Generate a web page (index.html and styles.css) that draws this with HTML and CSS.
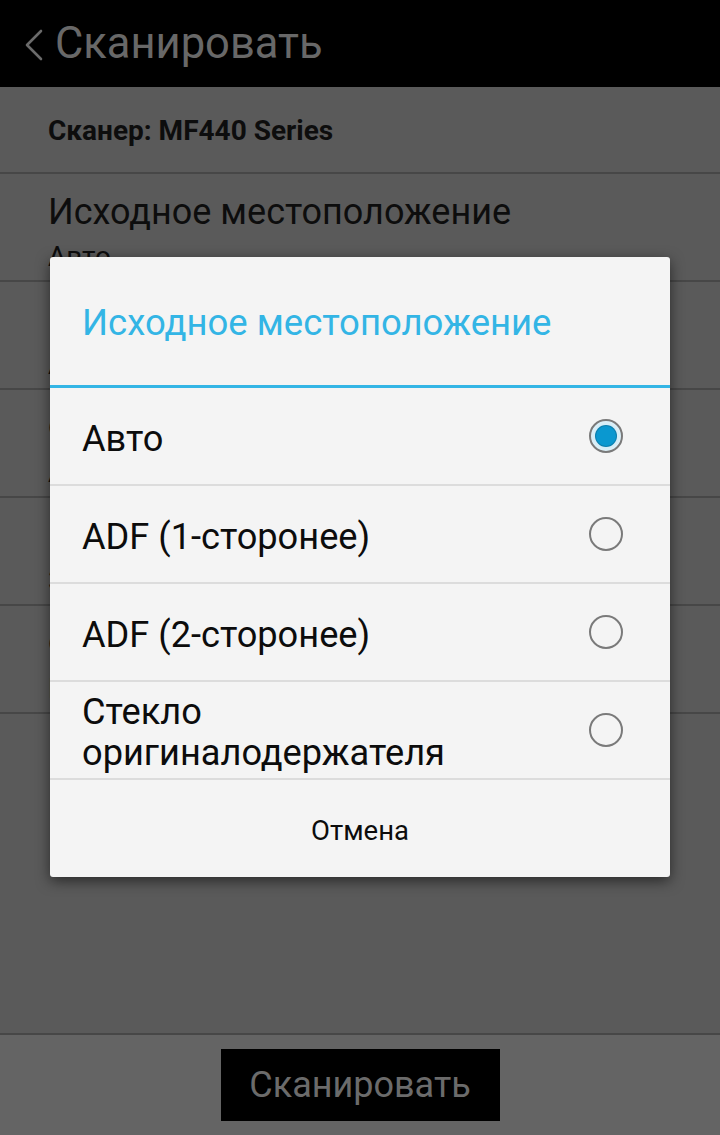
FILE: index.html
```html
<!DOCTYPE html>
<html lang="ru">
<head>
<meta charset="utf-8">
<title>Сканировать</title>
<link rel="stylesheet" href="styles.css">
</head>
<body>
<div class="screen">
  <header class="appbar">
    <svg class="back" width="20" height="32" viewBox="0 0 20 32"><polyline points="17,2 3,16 17,30" fill="none" stroke="#6a6a6a" stroke-width="2.6" stroke-linecap="round" stroke-linejoin="round"/></svg>
    <span class="apptitle">Сканировать</span>
  </header>
  <main class="list">
    <div class="row row-head">Сканер: MF440 Series</div>
    <div class="row"><div class="r-title">Исходное местоположение</div><div class="r-sub">Авто</div></div>
    <div class="row"><div class="r-title">Цветной режим</div><div class="r-sub">Авто (цвет/ч/б)</div></div>
    <div class="row"><div class="r-title">Формат документа</div><div class="r-sub">A4</div></div>
    <div class="row"><div class="r-title">Разрешение</div><div class="r-sub">300x300 т/д</div></div>
    <div class="row"><div class="r-title">Формат файла</div><div class="r-sub">PDF</div></div>
  </main>
  <footer class="bottombar"><button class="scanbtn">Сканировать</button></footer>

  <div class="dialog">
    <div class="d-title">Исходное местоположение</div>
    <div class="d-items">
      <div class="d-item"><span class="d-label">Авто</span><span class="radio checked"></span></div>
      <div class="d-item"><span class="d-label">ADF (1-сторонее)</span><span class="radio"></span></div>
      <div class="d-item"><span class="d-label">ADF (2-сторонее)</span><span class="radio"></span></div>
      <div class="d-item"><span class="d-label">Стекло<br>оригиналодержателя</span><span class="radio"></span></div>
    </div>
    <div class="d-cancel">Отмена</div>
  </div>
</div>
</body>
</html>
```

FILE: styles.css
```css
* { box-sizing: border-box; }
html, body { margin: 0; padding: 0; }
body { font-family: Roboto, "Noto Sans", sans-serif; background: #5a5a5a; }

.screen {
  position: relative;
  width: 720px;
  height: 1135px;
  display: flex;
  flex-direction: column;
  overflow: hidden;
}

.appbar {
  height: 87px;
  background: #000;
  display: flex;
  align-items: center;
  padding-left: 24px;
  gap: 11px;
  flex: none;
}
.back { flex: none; margin-top: 2px; }
.apptitle {
  color: #686868;
  font-size: 43.5px;
}

.list {
  flex: 1;
  background: #5a5a5a;
  border-bottom: 2px solid #474747;
}
.row {
  height: 108px;
  border-bottom: 2px solid #474747;
  padding: 17px 48px 0;
  color: #0d0d0d;
}
.row-head {
  height: 87px;
  padding-top: 2px;
  display: flex;
  align-items: center;
  font-weight: bold;
  font-size: 28px;
}
.r-title { font-size: 36px; line-height: 42px; }
.r-sub { font-size: 28px; line-height: 30px; margin-top: 9px; }

.bottombar {
  height: 100px;
  flex: none;
  background: #646464;
  display: flex;
  justify-content: center;
  align-items: flex-start;
  padding-top: 14px;
}
.scanbtn {
  width: 279px;
  height: 72px;
  background: #000;
  border: none;
  border-radius: 0;
  color: #6b6b6b;
  font-family: Roboto, sans-serif;
  font-size: 36px;
  padding: 0;
}

.dialog {
  position: absolute;
  top: 257px;
  left: 50px;
  width: 620px;
  height: 620px;
  background: #f4f4f4;
  border-radius: 3px;
  box-shadow: 0 4px 14px rgba(0,0,0,0.55);
  display: flex;
  flex-direction: column;
}
.d-title {
  height: 131px;
  border-bottom: 3px solid #33b5e5;
  color: #33b5e5;
  font-size: 36.5px;
  padding-left: 32px;
  padding-top: 2px;
  display: flex;
  align-items: center;
}
.d-item {
  height: 98px;
  border-bottom: 2px solid #dcdcdc;
  display: flex;
  align-items: center;
  justify-content: space-between;
  padding: 0 47px 0 32px;
}
.d-label {
  font-size: 36.2px;
  line-height: 41px;
  color: #0c0c0c;
  padding-top: 4px;
}
.radio {
  width: 34px;
  height: 34px;
  border-radius: 50%;
  border: 2px solid #7a7a7a;
  flex: none;
  position: relative;
}
.radio.checked {
  background: radial-gradient(circle, #bfe3f2 0, #d8eef7 60%, #e9f4f9 100%);
}
.radio.checked::after {
  content: "";
  position: absolute;
  left: 5px;
  top: 5px;
  width: 20px;
  height: 20px;
  border-radius: 50%;
  background: #0a98d0;
  box-shadow: 0 0 0 1px #0b7fae;
}
.d-cancel {
  flex: 1;
  display: flex;
  align-items: center;
  justify-content: center;
  font-size: 27.5px;
  color: #0c0c0c;
  padding-top: 3px;
}
```
